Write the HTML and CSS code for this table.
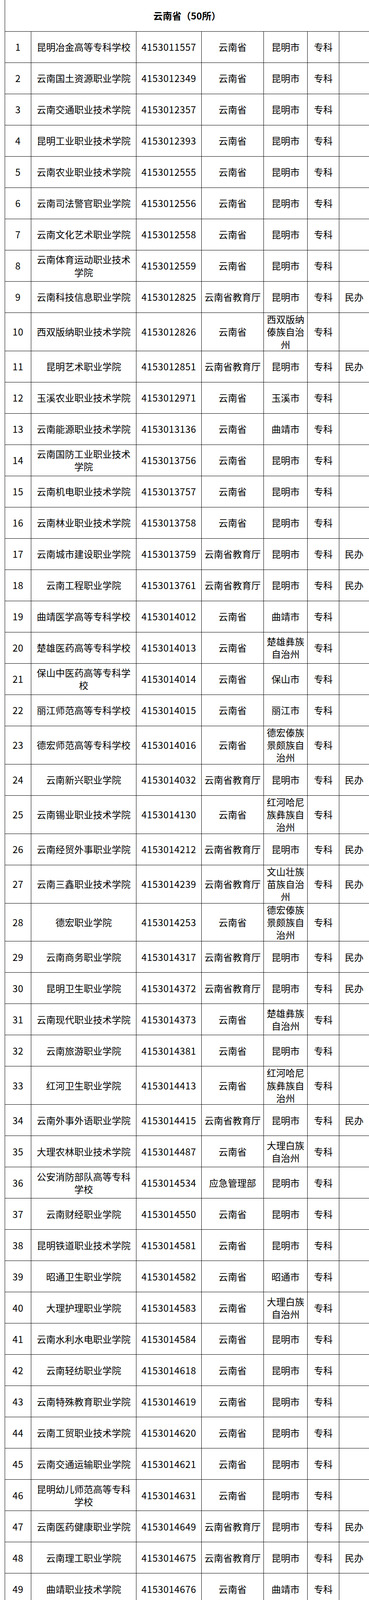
FILE: index.html
```html
<!DOCTYPE html>
<html lang="zh-CN">
<head>
<meta charset="utf-8">
<title>云南省（50所）</title>
<link rel="stylesheet" href="styles.css">
</head>
<body>
<table class="list">
<colgroup>
<col class="c-no"><col class="c-name"><col class="c-code"><col class="c-dept"><col class="c-city"><col class="c-level"><col class="c-note">
</colgroup>
<thead>
<tr class="head"><th colspan="7">云南省（50所）</th></tr>
</thead>
<tbody>
<tr><td>1</td><td>昆明冶金高等专科学校</td><td>4153011557</td><td>云南省</td><td>昆明市</td><td>专科</td><td></td></tr>
<tr><td>2</td><td>云南国土资源职业学院</td><td>4153012349</td><td>云南省</td><td>昆明市</td><td>专科</td><td></td></tr>
<tr><td>3</td><td>云南交通职业技术学院</td><td>4153012357</td><td>云南省</td><td>昆明市</td><td>专科</td><td></td></tr>
<tr><td>4</td><td>昆明工业职业技术学院</td><td>4153012393</td><td>云南省</td><td>昆明市</td><td>专科</td><td></td></tr>
<tr><td>5</td><td>云南农业职业技术学院</td><td>4153012555</td><td>云南省</td><td>昆明市</td><td>专科</td><td></td></tr>
<tr><td>6</td><td>云南司法警官职业学院</td><td>4153012556</td><td>云南省</td><td>昆明市</td><td>专科</td><td></td></tr>
<tr><td>7</td><td>云南文化艺术职业学院</td><td>4153012558</td><td>云南省</td><td>昆明市</td><td>专科</td><td></td></tr>
<tr><td>8</td><td>云南体育运动职业技术学院</td><td>4153012559</td><td>云南省</td><td>昆明市</td><td>专科</td><td></td></tr>
<tr><td>9</td><td>云南科技信息职业学院</td><td>4153012825</td><td>云南省教育厅</td><td>昆明市</td><td>专科</td><td>民办</td></tr>
<tr><td>10</td><td>西双版纳职业技术学院</td><td>4153012826</td><td>云南省</td><td>西双版纳傣族自治州</td><td>专科</td><td></td></tr>
<tr><td>11</td><td>昆明艺术职业学院</td><td>4153012851</td><td>云南省教育厅</td><td>昆明市</td><td>专科</td><td>民办</td></tr>
<tr><td>12</td><td>玉溪农业职业技术学院</td><td>4153012971</td><td>云南省</td><td>玉溪市</td><td>专科</td><td></td></tr>
<tr><td>13</td><td>云南能源职业技术学院</td><td>4153013136</td><td>云南省</td><td>曲靖市</td><td>专科</td><td></td></tr>
<tr><td>14</td><td>云南国防工业职业技术学院</td><td>4153013756</td><td>云南省</td><td>昆明市</td><td>专科</td><td></td></tr>
<tr><td>15</td><td>云南机电职业技术学院</td><td>4153013757</td><td>云南省</td><td>昆明市</td><td>专科</td><td></td></tr>
<tr><td>16</td><td>云南林业职业技术学院</td><td>4153013758</td><td>云南省</td><td>昆明市</td><td>专科</td><td></td></tr>
<tr><td>17</td><td>云南城市建设职业学院</td><td>4153013759</td><td>云南省教育厅</td><td>昆明市</td><td>专科</td><td>民办</td></tr>
<tr><td>18</td><td>云南工程职业学院</td><td>4153013761</td><td>云南省教育厅</td><td>昆明市</td><td>专科</td><td>民办</td></tr>
<tr><td>19</td><td>曲靖医学高等专科学校</td><td>4153014012</td><td>云南省</td><td>曲靖市</td><td>专科</td><td></td></tr>
<tr><td>20</td><td>楚雄医药高等专科学校</td><td>4153014013</td><td>云南省</td><td>楚雄彝族自治州</td><td>专科</td><td></td></tr>
<tr><td>21</td><td>保山中医药高等专科学校</td><td>4153014014</td><td>云南省</td><td>保山市</td><td>专科</td><td></td></tr>
<tr><td>22</td><td>丽江师范高等专科学校</td><td>4153014015</td><td>云南省</td><td>丽江市</td><td>专科</td><td></td></tr>
<tr><td>23</td><td>德宏师范高等专科学校</td><td>4153014016</td><td>云南省</td><td>德宏傣族景颇族自治州</td><td>专科</td><td></td></tr>
<tr><td>24</td><td>云南新兴职业学院</td><td>4153014032</td><td>云南省教育厅</td><td>昆明市</td><td>专科</td><td>民办</td></tr>
<tr><td>25</td><td>云南锡业职业技术学院</td><td>4153014130</td><td>云南省</td><td>红河哈尼族彝族自治州</td><td>专科</td><td></td></tr>
<tr><td>26</td><td>云南经贸外事职业学院</td><td>4153014212</td><td>云南省教育厅</td><td>昆明市</td><td>专科</td><td>民办</td></tr>
<tr><td>27</td><td>云南三鑫职业技术学院</td><td>4153014239</td><td>云南省教育厅</td><td>文山壮族苗族自治州</td><td>专科</td><td>民办</td></tr>
<tr><td>28</td><td>德宏职业学院</td><td>4153014253</td><td>云南省</td><td>德宏傣族景颇族自治州</td><td>专科</td><td></td></tr>
<tr><td>29</td><td>云南商务职业学院</td><td>4153014317</td><td>云南省教育厅</td><td>昆明市</td><td>专科</td><td>民办</td></tr>
<tr><td>30</td><td>昆明卫生职业学院</td><td>4153014372</td><td>云南省教育厅</td><td>昆明市</td><td>专科</td><td>民办</td></tr>
<tr><td>31</td><td>云南现代职业技术学院</td><td>4153014373</td><td>云南省</td><td>楚雄彝族自治州</td><td>专科</td><td></td></tr>
<tr><td>32</td><td>云南旅游职业学院</td><td>4153014381</td><td>云南省</td><td>昆明市</td><td>专科</td><td></td></tr>
<tr><td>33</td><td>红河卫生职业学院</td><td>4153014413</td><td>云南省</td><td>红河哈尼族彝族自治州</td><td>专科</td><td></td></tr>
<tr><td>34</td><td>云南外事外语职业学院</td><td>4153014415</td><td>云南省教育厅</td><td>昆明市</td><td>专科</td><td>民办</td></tr>
<tr><td>35</td><td>大理农林职业技术学院</td><td>4153014487</td><td>云南省</td><td>大理白族自治州</td><td>专科</td><td></td></tr>
<tr><td>36</td><td>公安消防部队高等专科学校</td><td>4153014534</td><td>应急管理部</td><td>昆明市</td><td>专科</td><td></td></tr>
<tr><td>37</td><td>云南财经职业学院</td><td>4153014550</td><td>云南省</td><td>昆明市</td><td>专科</td><td></td></tr>
<tr><td>38</td><td>昆明铁道职业技术学院</td><td>4153014581</td><td>云南省</td><td>昆明市</td><td>专科</td><td></td></tr>
<tr><td>39</td><td>昭通卫生职业学院</td><td>4153014582</td><td>云南省</td><td>昭通市</td><td>专科</td><td></td></tr>
<tr><td>40</td><td>大理护理职业学院</td><td>4153014583</td><td>云南省</td><td>大理白族自治州</td><td>专科</td><td></td></tr>
<tr><td>41</td><td>云南水利水电职业学院</td><td>4153014584</td><td>云南省</td><td>昆明市</td><td>专科</td><td></td></tr>
<tr><td>42</td><td>云南轻纺职业学院</td><td>4153014618</td><td>云南省</td><td>昆明市</td><td>专科</td><td></td></tr>
<tr><td>43</td><td>云南特殊教育职业学院</td><td>4153014619</td><td>云南省</td><td>昆明市</td><td>专科</td><td></td></tr>
<tr><td>44</td><td>云南工贸职业技术学院</td><td>4153014620</td><td>云南省</td><td>昆明市</td><td>专科</td><td></td></tr>
<tr><td>45</td><td>云南交通运输职业学院</td><td>4153014621</td><td>云南省</td><td>昆明市</td><td>专科</td><td></td></tr>
<tr><td>46</td><td>昆明幼儿师范高等专科学校</td><td>4153014631</td><td>云南省</td><td>昆明市</td><td>专科</td><td></td></tr>
<tr><td>47</td><td>云南医药健康职业学院</td><td>4153014649</td><td>云南省教育厅</td><td>昆明市</td><td>专科</td><td>民办</td></tr>
<tr><td>48</td><td>云南理工职业学院</td><td>4153014675</td><td>云南省教育厅</td><td>昆明市</td><td>专科</td><td>民办</td></tr>
<tr><td>49</td><td>曲靖职业技术学院</td><td>4153014676</td><td>云南省</td><td>曲靖市</td><td>专科</td><td></td></tr>
<tr><td>50</td><td>红河职业技术学院</td><td>4153014736</td><td>云南省</td><td>红河州</td><td>专科</td><td></td></tr>
</tbody>
</table>
</body>
</html>
```
FILE: styles.css
```css
html, body {
  margin: 0;
  padding: 0;
  background: #fff;
}

body {
  font-family: "Noto Sans CJK SC", "Noto Sans", sans-serif;
  color: #000;
}

.list {
  margin: 0 0 0 12px;
  width: 932px;
  table-layout: fixed;
  border-collapse: collapse;
}

.c-no { width: 67px; }
.c-name { width: 269px; }
.c-code { width: 167px; }
.c-dept { width: 159px; }
.c-city { width: 112px; }
.c-level { width: 81px; }
.c-note { width: 77px; }

.list th,
.list td {
  border: 1px solid #000;
  padding: 0 5px;
  text-align: center;
  vertical-align: middle;
  font-size: 24px;
  line-height: 32.3px;
  font-weight: normal;
}

.list td:nth-child(1),
.list td:nth-child(3) {
  letter-spacing: 0.7px;
}

.list tbody tr {
  height: 80px;
}

.list .head th {
  border-top: 0;
  height: 80px;
  font-weight: bold;
}
```
